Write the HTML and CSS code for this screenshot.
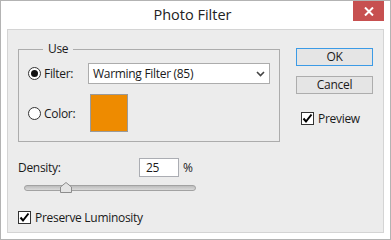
FILE: index.html
```html
<!DOCTYPE html>
<html>
<head>
<meta charset="utf-8">
<link rel="stylesheet" href="styles.css">
</head>
<body>
<div class="window">
  <header class="titlebar">
    <span class="tb-spacer"></span>
    <h1 class="title">Photo Filter</h1>
    <button class="close" aria-label="Close">
      <svg width="10" height="9" viewBox="0 0 10 9"><path d="M1 0.5 L9 8.5 M9 0.5 L1 8.5" stroke="#fff" stroke-width="2" fill="none"/></svg>
    </button>
  </header>
  <main class="client">
    <div class="left">
      <fieldset class="group">
        <legend class="legend">Use</legend>
        <div class="row">
          <label class="opt"><span class="radio checked"></span><span>Filter:</span></label>
          <div class="select">
            <span class="select-text">Warming Filter (85)</span>
            <svg class="chev" width="9" height="6" viewBox="0 0 9 6"><path d="M1 1 L4.5 4.5 L8 1" stroke="#444" stroke-width="1.6" fill="none"/></svg>
          </div>
        </div>
        <div class="row">
          <label class="opt"><span class="radio"></span><span>Color:</span></label>
          <div class="swatch"></div>
        </div>
      </fieldset>
      <div class="density">
        <span class="density-label">Density:</span>
        <div class="num">25</div>
        <span class="pct">%</span>
      </div>
      <div class="slider">
        <div class="track"></div>
        <svg class="thumb" width="12" height="11" viewBox="0 0 12 11"><path d="M0.5 10.5 V5 L6 0.5 L11.5 5 V10.5 Z" fill="#e4e4e4" stroke="#8c8c8c"/></svg>
      </div>
      <label class="check lum">
        <span class="box"><svg width="11" height="11" viewBox="0 0 11 11"><path d="M1.5 5.5 L4 8.5 L9.5 1.5" stroke="#000" stroke-width="2" fill="none"/></svg></span>
        <span>Preserve Luminosity</span>
      </label>
    </div>
    <div class="right">
      <button class="btn default">OK</button>
      <button class="btn">Cancel</button>
      <label class="check preview">
        <span class="box"><svg width="11" height="11" viewBox="0 0 11 11"><path d="M1.5 5.5 L4 8.5 L9.5 1.5" stroke="#000" stroke-width="2" fill="none"/></svg></span>
        <span>Preview</span>
      </label>
    </div>
  </main>
</div>
</body>
</html>
```
FILE: styles.css
```css
* { box-sizing: border-box; }
html, body { margin: 0; padding: 0; }
body {
  width: 391px;
  height: 240px;
  font-family: "Open Sans", "Noto Sans", sans-serif;
  font-size: 12px;
  letter-spacing: -0.3px;
  color: #1a1a1a;
  background: #fff;
}
.window {
  width: 391px;
  height: 240px;
  border: 1px solid #b3b3b3;
  background: #fff;
  display: flex;
  flex-direction: column;
  padding: 0 6px 6px 6px;
}
.titlebar {
  height: 28px;
  display: grid;
  grid-template-columns: 1fr auto 1fr;
  margin: 0 -6px;
  padding-right: 6px;
}
.title {
  margin: 0;
  font-weight: normal;
  font-size: 14.5px;
  letter-spacing: 0;
  line-height: 28px;
  color: #222;
  text-align: center;
}
.close {
  justify-self: end;
  align-self: start;
  width: 31px;
  height: 20px;
  border: none;
  padding: 0;
  margin: 0;
  background: #c75050;
  display: flex;
  align-items: center;
  justify-content: center;
}
.client {
  flex: 1;
  border: 1px solid #d4d4d4;
  background: #ececec;
  display: flex;
  padding: 0 10px;
  gap: 16px;
}
.left {
  width: 262px;
  display: flex;
  flex-direction: column;
}
.group {
  margin: 11px 0 0 0;
  padding: 6px 9px 9px 9px;
  border: 1px solid #acacac;
  display: flex;
  flex-direction: column;
  gap: 10px;
}
.legend {
  margin-left: 15px;
  padding: 0 5px;
  line-height: 16px;
}
.row {
  display: flex;
  align-items: center;
}
.opt {
  width: 60px;
  display: flex;
  align-items: center;
  gap: 3px;
}
.radio {
  width: 13px;
  height: 13px;
  border: 1px solid #333;
  border-radius: 50%;
  background: #fff;
  display: flex;
  align-items: center;
  justify-content: center;
}
.radio.checked::after {
  content: "";
  width: 7px;
  height: 7px;
  border-radius: 50%;
  background: #111;
}
.select {
  width: 182px;
  height: 21px;
  border: 1px solid #acacac;
  background: #fff;
  display: flex;
  align-items: center;
  justify-content: space-between;
  padding: 0 4px 0 4px;
}
.chev { margin-top: 1px; }
.swatch {
  margin-left: 2px;
  width: 38px;
  height: 38px;
  border: 1px solid #9a9a9a;
  background: #ee8b00;
}
.density {
  margin-top: 16px;
  display: flex;
  align-items: center;
  height: 19px;
}
.density-label { width: 121px; }
.num {
  width: 40px;
  height: 19px;
  border: 1px solid #abadb3;
  background: #fff;
  padding-left: 6px;
  line-height: 17px;
}
.pct { margin-left: 4px; }
.slider {
  position: relative;
  margin-top: 5px;
  height: 11px;
  display: flex;
  align-items: center;
}
.track {
  margin-left: 6px;
  width: 172px;
  height: 6px;
  border: 1px solid #a2a2a2;
  border-radius: 3px;
  background: linear-gradient(#bdbdbd, #dadada);
}
.thumb {
  position: absolute;
  left: 42px;
  top: 0;
}
.check {
  display: flex;
  align-items: center;
  gap: 4px;
}
.box {
  width: 13px;
  height: 13px;
  border: 1px solid #333;
  background: #fff;
  display: flex;
  align-items: center;
  justify-content: center;
}
.lum { margin-top: 16px; }
.right {
  width: 77px;
  display: flex;
  flex-direction: column;
  padding-top: 18px;
}
.btn {
  font: inherit;
  letter-spacing: inherit;
  color: #1a1a1a;
  height: 18px;
  width: 77px;
  padding: 0;
  border: 1px solid #adadad;
  background: #e5e5e5;
  line-height: 16px;
}
.btn.default { border-color: #3c9be6; }
.btn + .btn { margin-top: 10px; }
.preview {
  margin-top: 16px;
  margin-left: 5px;
}
```
